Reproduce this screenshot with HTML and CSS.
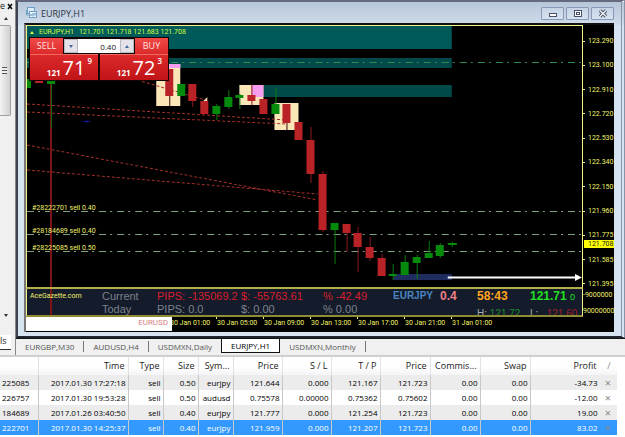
FILE: index.html
```
<!DOCTYPE html>
<html lang="en">
<head>
  <meta charset="UTF-8" />
  <meta name="viewport" content="width=device-width, initial-scale=1.0"/>
  <title>EURJPY,H1</title>
  <link rel="stylesheet" href="styles.css">
</head>
<body>

<div class="workspace">

  <!-- Docked panel, mostly off to the left -->
  <div class="dock">
    <div class="dock-head"><span>e</span><svg width="7" height="7" viewBox="0 0 7 7"><path d="M1 1l4 5M5 1L1 6" stroke="#111" stroke-width="1.6"/></svg></div>
    <div class="scroll">
      <i class="arrow up"></i>
      <div class="thumb"><i class="grip"></i></div>
      <i class="arrow down"></i>
    </div>
    <div class="dock-tab">ls</div>
  </div>

  <div class="main">
    <!-- Chart window -->
    <div class="window">
      <div class="titlebar">
        <svg class="app-icon" width="12" height="12" viewBox="0 0 12 12" fill="none" stroke="#6f9fc4">
          <rect x="1.5" y=".5" width="7" height="6" fill="#dcebf7"/>
          <rect x="3.5" y="4.5" width="7" height="6" fill="#eef6fc"/>
          <path d="M5 9V7M7 9.5V6M9 8.5V6" stroke="#4d86b4"/>
          <path d="M.5 3v5h2" />
        </svg>
        <span class="title">EURJPY,H1</span>
        <div class="controls">
          <button aria-label="Minimize"><svg width="10" height="9" viewBox="0 0 10 9"><rect x="1.5" y="4.5" width="7" height="3" fill="#fff" stroke="#46506a"/></svg></button>
          <button aria-label="Maximize"><svg width="10" height="9" viewBox="0 0 10 9"><rect x="1.5" y="1.5" width="7" height="6" fill="#fff" stroke="#46506a"/><rect x="3.5" y="3.5" width="3" height="2" fill="none" stroke="#46506a"/></svg></button>
          <button aria-label="Close"><svg width="10" height="9" viewBox="0 0 10 9"><path d="M2 1.5l6 6M8 1.5l-6 6" stroke="#46506a" stroke-width="3.2"/><path d="M2 1.5l6 6M8 1.5l-6 6" stroke="#fff" stroke-width="1.2"/></svg></button>
        </div>
      </div>

      <div class="chart">
        <div class="plot">
          <svg class="candles" viewBox="28 26 554 261" preserveAspectRatio="none">
            <!-- zones -->
            <path fill="#005a5a" d="M28 26H452V49H28z"/>
            <path fill="#004b49" d="M28 58H452V68H28zM264 85H452V97H264z"/>
            <path fill="#1e2d5e" d="M394 274H452V280H394z"/>
            <path fill="#fbe6b8" d="M157 64H181V106H157zM240 85H264V105H240zM275 103H299V130H275z"/>
            <path fill="#f79df0" d="M166 64H181V68H166zM252 85H264V97H252z"/>
            <!-- order lines -->
            <g fill="none" stroke-dasharray="7 4 2 5">
              <path stroke="#2f8a56" d="M28 62.5H582"/>
              <path stroke="#7fa37f" d="M28 211.5H582M28 234.5H582M28 251.5H582"/>
            </g>
            <path fill="none" stroke="#a03028" stroke-dasharray="3 2" d="M28 104L287 120M28 112L287 124M28 145L318 200M28 170L318 194M138 80L206 100"/>
            <path stroke="#7c1518" stroke-width="2" d="M52 83V287"/>
            <path stroke="#0a6a10" d="M52.5 83V128"/>
            <path stroke="#15158c" d="M84 121.5H91M87.5 120V123"/>
            <!-- wicks -->
            <path stroke="#8c1a1c" d="M193.5 84V107M252.5 85V105M311.5 127V183M323.5 171V232M347.5 224V252M358.5 227V272M370.5 237V261M382.5 254V276"/>
            <path stroke="#3a0c0c" d="M170.5 69V106M287.5 104V130"/>
            <path stroke="#0a7a10" d="M217.5 104V120M229.5 90V109M240.5 94V109M276.5 88V114M335.5 223V264M393.5 264V280M405.5 255V275M417.5 255V279M429.5 241V258M440.5 243V258M452.5 242V247"/>
            <!-- bodies -->
            <path fill="#b92226" d="M36 79h8v4h-8zM166 69h8v27h-8zM189 84h8v17h-8zM201 101h8v13h-8zM248 95h8v6h-8zM260 99h8v15h-8zM283 104h8v19h-8zM295 122h8v18h-8zM307 140h8v34h-8zM319 174h8v56h-8zM343 224h8v9h-8zM354 233h8v14h-8zM366 247h8v11h-8zM378 258h8v18h-8z"/>
            <path fill="#058a0b" d="M28 79h4v9h-4zM48 79h8v5h-8zM178 84h8v12h-8zM213 106h8v8h-8zM225 97h8v10h-8zM236 95h8v3h-8zM272 104h8v10h-8zM331 223h8v7h-8zM389 274h8v2h-8zM401 262h8v13h-8zM413 257h8v6h-8zM425 253h8v5h-8zM436 245h8v11h-8zM448 243h9v2h-9z"/>
            <path fill="#f6d9b0" d="M208 97v4h-4z"/>
            <path fill="#fff" d="M448 276.5H575V274L582 277.5L575 281V278.5H448z"/>
          </svg>
          <div class="quote"><i></i><span>EURJPY,H1</span><span>121.701 121.718 121.683 121.708</span></div>
          <span class="order o1">#28222701 sell 0.40</span>
          <span class="order o2">#28184689 sell 0.40</span>
          <span class="order o3">#28225085 sell 0.50</span>

          <!-- One click trading -->
          <div class="trade">
            <div class="trade-top">
              <button class="side">SELL</button>
              <div class="lot">
                <button aria-label="Less"><i class="arrow down"></i></button>
                <input type="text" value="0.40" aria-label="Volume">
                <button aria-label="More"><i class="arrow up"></i></button>
              </div>
              <button class="side">BUY</button>
            </div>
            <div class="trade-prices">
              <button class="price"><small>121</small><b>71</b><sup>9</sup></button>
              <button class="price"><small>121</small><b>72</b><sup>3</sup></button>
            </div>
          </div>
        </div>

        <div class="axis">
          <span>123.290</span><span>123.100</span><span>122.910</span><span>122.720</span><span>122.530</span><span>122.340</span><span>122.150</span><span>121.960</span><span>121.775</span><span>121.585</span><span>121.395</span>
          <span class="now">121.708</span>
        </div>

        <div class="info">
          <span class="site">AceGazette.com</span>
          <span class="g">Current</span><span class="r">PIPS: -135069.2</span><span class="r">$: -55763.61</span><span class="r">% -42.49</span>
          <b class="pair">EURJPY</b><b class="spread">0.4</b><b class="clock">58:43</b><b class="last">121.71 <small>0</small></b>
          <span></span>
          <span class="g">Today</span><span class="g">PIPS: 0.0</span><span class="g">$: 0.00</span><span class="g">% 0.00</span>
          <span></span><span></span>
          <span class="hl">H: <em class="hi">121.72</em></span><span class="hl">L: &nbsp; <em class="lo">121.60</em></span>
        </div>
        <div class="axis2"><span>-9000000</span><span>90000000</span></div>

        <div class="times">
          <div class="cover">EURUSD</div>
          <span>30 Jan 01:00</span><span>30 Jan 05:00</span><span>30 Jan 09:00</span><span>30 Jan 13:00</span><span>30 Jan 17:00</span><span>30 Jan 21:00</span><span>31 Jan 01:00</span>
        </div>
      </div>
    </div>

    <!-- Chart tabs -->
    <div class="tabs">
      <button>EURGBP,M30</button>
      <button>AUDUSD,H4</button>
      <button>USDMXN,Daily</button>
      <button class="active">EURJPY,H1</button>
      <button>USDMXN,Monthly</button>
    </div>
  </div>
</div>

<!-- Open orders -->
<table class="orders">
  <colgroup>
    <col class="c-id"><col class="c-time"><col class="c-s"><col class="c-s"><col class="c-s"><col class="c-m"><col class="c-m"><col class="c-m"><col class="c-l"><col class="c-l"><col class="c-l"><col><col class="c-x">
  </colgroup>
  <thead>
    <tr><th></th><th>Time</th><th>Type</th><th>Size</th><th>Sym...</th><th>Price</th><th>S / L</th><th>T / P</th><th>Price</th><th>Commis...</th><th>Swap</th><th>Profit</th><th class="sort">/</th></tr>
  </thead>
  <tbody>
    <tr><td>225085</td><td>2017.01.30 17:27:18</td><td>sell</td><td>0.50</td><td>eurjpy</td><td>121.644</td><td>0.000</td><td>121.167</td><td>121.723</td><td>0.00</td><td>0.00</td><td>-34.73</td><td><button aria-label="Close order">×</button></td></tr>
    <tr><td>226757</td><td>2017.01.30 19:53:28</td><td>sell</td><td>0.50</td><td>audusd</td><td>0.75578</td><td>0.00000</td><td>0.75362</td><td>0.75602</td><td>0.00</td><td>0.00</td><td>-12.00</td><td><button aria-label="Close order">×</button></td></tr>
    <tr><td>184689</td><td>2017.01.26 03:40:50</td><td>sell</td><td>0.40</td><td>eurjpy</td><td>121.777</td><td>0.000</td><td>121.254</td><td>121.723</td><td>0.00</td><td>0.00</td><td>19.00</td><td><button aria-label="Close order">×</button></td></tr>
    <tr class="selected"><td>222701</td><td>2017.01.30 14:25:37</td><td>sell</td><td>0.40</td><td>eurjpy</td><td>121.959</td><td>0.000</td><td>121.207</td><td>121.723</td><td>0.00</td><td>0.00</td><td>83.02</td><td><button aria-label="Close order">×</button></td></tr>
  </tbody>
</table>

</body>
</html>
```
FILE: styles.css
```
* {
  box-sizing: border-box;
}

body {
  margin: 0;
  background: #fff;
  font-family: "Open Sans", "Noto Sans", sans-serif;
  font-size: 8px;
  line-height: 12px;
  color: #222;
}

button {
  margin: 0;
  padding: 0;
  border: 0;
  background: none;
  font: inherit;
  color: inherit;
}

svg {
  display: block;
}

.workspace {
  display: flex;
  border-bottom: 2px solid #cfcfcf;
}

/* Left dock */
.dock {
  display: flex;
  flex-direction: column;
  width: 15px;
  background: #f0f0f0;
}

.dock-head {
  display: flex;
  align-items: center;
  gap: 2px;
  height: 12px;
  font-size: 9px;
}

.scroll {
  flex: 1;
  display: flex;
  flex-direction: column;
  align-items: center;
  width: 11px;
  padding: 5px 0 18px;
}

.arrow {
  display: block;
  width: 0;
  border: 2px solid transparent;
}

.arrow.up {
  border-bottom: 3px solid #333;
  border-top: 0;
}

.arrow.down {
  border-top: 3px solid #333;
  border-bottom: 0;
}

.thumb {
  display: flex;
  align-items: center;
  width: 11px;
  height: 91px;
  margin: 5px 0 auto;
  border: 1px solid #a0a0a0;
  border-left: 0;
  border-radius: 0 2px 2px 0;
  background: linear-gradient(90deg, #f4f4f4, #d0d0d4);
}

.grip {
  width: 5px;
  height: 7px;
  margin-left: 2px;
  background: repeating-linear-gradient(#555 0 1px, #eee 1px 3px);
}

.dock-tab {
  width: 11px;
  height: 15px;
  margin-bottom: 5px;
  border-bottom: 1px solid #333;
  background: #fff;
  font-size: 9px;
}

.main {
  flex: 1;
  min-width: 0;
  border-left: 1px solid #888;
}

/* Window */
.window {
  padding: 0 7px 4px 6px;
  border: 2px solid #3c4250;
  border-top-color: #666a80;
  border-right: 4px double #8793a8;
  border-bottom: 2px solid #20242c;
  background: linear-gradient(#b7c6d9, #cedbea 22px, #d6e3f1 24px);
}

.titlebar {
  display: flex;
  align-items: center;
  height: 21px;
}

.title {
  margin: 2px 0 0 3px;
  font-size: 9px;
  color: #2c3440;
}

.app-icon {
  margin-left: 2px;
}

.controls {
  display: flex;
  gap: 2px;
  margin-left: auto;
  padding-top: 2px;
}

.controls button {
  display: grid;
  place-items: center;
  width: 23px;
  height: 13px;
  border: 1px solid #8898b8;
  border-radius: 1px;
  background: linear-gradient(#c6d4e6, #d6e2f0);
}

/* Chart */
.chart {
  display: grid;
  grid-template-columns: 1fr 31px;
  background: #000;
  border-top: 2px solid #111;
  border-left: 2px solid #777;
  color: #f2f26c;
  font-family: Roboto, sans-serif;
  font-size: 7px;
}

.plot {
  position: relative;
  border: 1px solid #f4f48c;
  border-bottom: 2px solid #b5ad4c;
}

.candles {
  width: 100%;
  height: 261px;
}

.quote {
  position: absolute;
  top: 0;
  left: 3px;
  display: flex;
  align-items: center;
  gap: 5px;
  color: #d6ff3c;
}

.quote i {
  border: 2px solid transparent;
  border-top: 0;
  border-bottom: 3px solid #d6ff3c;
}

.order {
  position: absolute;
  left: 5px;
}

.o1 { top: 176px; }
.o2 { top: 199px; }
.o3 { top: 216px; }

.axis {
  position: relative;
  display: flex;
  flex-direction: column;
  justify-content: space-between;
  padding-top: 11px;
}

.axis span {
  display: flex;
  align-items: center;
  gap: 3px;
  height: 10px;
}

.axis span::before {
  content: "";
  width: 2px;
  height: 1px;
  background: #f2f26c;
}

.axis .now {
  position: absolute;
  top: 215px;
  left: 1px;
  right: 0;
  height: 8px;
  background: #ff0;
  color: #222;
}

.axis .now::before {
  width: 1px;
  background: none;
}

/* One click trading panel */
.trade {
  position: absolute;
  top: 11px;
  left: 2px;
  width: 140px;
  padding: 1px;
  background: #140404;
  color: #fff;
}

.trade-top,
.trade-prices {
  display: flex;
  justify-content: space-between;
}

.side {
  width: 33px;
  height: 16px;
  background: linear-gradient(#f04a48, #dc2a2a);
  color: #ffe2e0;
  font-family: "Open Sans", sans-serif;
  font-size: 9px;
}

.lot {
  display: flex;
  width: 70px;
  height: 14px;
  margin-top: 1px;
  background: #fff;
}

.lot button {
  display: grid;
  place-items: center;
  width: 14px;
  border: 1px solid #b8b8c0;
  background: #e2e2e8;
}

.lot .arrow.up {
  border-bottom-color: #4466a0;
}

.lot .arrow.down {
  border-top-color: #4466a0;
}

.lot input {
  flex: 1;
  min-width: 0;
  padding: 0 4px;
  border: 0;
  font-family: "Open Sans", sans-serif;
  font-size: 8px;
  text-align: right;
  color: #111;
}

.price {
  display: flex;
  justify-content: flex-end;
  align-items: flex-end;
  gap: 2px;
  width: 68px;
  height: 26px;
  padding-right: 6px;
  border-top: 1px solid #f06a60;
  background: linear-gradient(#dd2a2a, #c01418);
  font-family: "Open Sans", sans-serif;
}

.price small {
  font-size: 8px;
  font-weight: 700;
  line-height: 14px;
}

.price b {
  font-size: 20px;
  font-weight: 400;
  line-height: 24px;
}

.price sup {
  align-self: flex-start;
  font-size: 8px;
  font-weight: 600;
  line-height: 12px;
}

/* Account info strip */
.info {
  display: grid;
  grid-template-columns: 72px 55px 84px 82px 70px 47px 37px 53px 1fr;
  grid-template-rows: 14px 12px;
  align-items: center;
  height: 28px;
  padding-left: 3px;
  overflow: hidden;
  border: 1px solid #f4f48c;
  border-top: 0;
  border-bottom: 2px solid #8e8c34;
  background: linear-gradient(90deg, transparent 23px, #7c1518 23px 25px, transparent 25px), #141b2a;
  font-family: "Liberation Sans", sans-serif;
  font-size: 11px;
  white-space: nowrap;
}

.site {
  font-family: Roboto, sans-serif;
  font-size: 7px;
}

.g { color: #7d828c; }
.r { color: #d81f2e; }
.pair { color: #4a86c0; font-size: 10px; }
.spread { color: #f08088; font-size: 12px; }
.clock { color: #ffa520; font-size: 12px; }
.last { color: #22e022; font-size: 12px; }

.last small {
  font-size: 9px;
  font-weight: 400;
}

.hl {
  padding-top: 10px;
  color: #aaa;
  font-size: 10px;
}

.hl em {
  font-style: normal;
}

.hi { color: #1c8a2c; }
.lo { color: #a01e28; }

.axis2 {
  display: flex;
  flex-direction: column;
  justify-content: space-between;
}

.times {
  position: relative;
  grid-column: 1 / 3;
  display: flex;
  height: 15px;
  padding-left: 143px;
  white-space: nowrap;
}

.times span {
  width: 47px;
  border-left: 1px solid transparent;
  border-image: linear-gradient(#f2f26c 0 3px, transparent 3px) 1;
}

.cover {
  position: absolute;
  top: 0;
  left: 0;
  width: 146px;
  height: 14px;
  padding-right: 4px;
  background: #fff;
  color: #d88080;
  font-size: 8px;
  text-align: right;
}

/* Tabs */
.tabs {
  display: flex;
  height: 17px;
  border-top: 1px solid #111;
  background: #f0f0f0;
  color: #555;
}

.tabs button {
  height: 11px;
  margin-top: 2px;
  padding: 0 9px;
  border-right: 1px solid #777;
  line-height: 11px;
  white-space: nowrap;
}

.tabs button:nth-child(3) {
  border-right: 0;
}

.tabs .active {
  height: 14px;
  margin-top: 0;
  border: 1px solid #111;
  border-top: 0;
  background: #fff;
  color: #000;
}

/* Orders table */
.orders {
  width: calc(100% - 8px);
  table-layout: fixed;
  border-collapse: collapse;
}

.c-id { width: 38px; }
.c-time { width: 90px; }
.c-s { width: 35px; }
.c-m { width: 49px; }
.c-l { width: 50px; }
.c-x { width: 17px; }

.orders th,
.orders td {
  height: 15px;
  padding: 0 2px;
  border-right: 1px solid #c8c8c8;
  font-weight: 400;
  text-align: right;
  white-space: nowrap;
}

.orders td {
  color: #000;
}

.orders th {
  height: 18px;
  padding-right: 3px;
  border-color: #e2e2e6;
  background: linear-gradient(#fff 50%, #f4f4f6);
  font-size: 9px;
}

.orders tr > :first-child {
  padding-right: 14px;
}

.orders tr > :nth-child(12),
.orders tr > :nth-child(13) {
  border-right: 0;
}

.orders .sort {
  padding-right: 6px;
  color: #888;
}

.orders tbody tr:nth-child(odd) {
  background: #ececec;
}

.orders .selected,
.orders .selected td {
  background: #3399ff;
  color: #fff;
}

.orders td button {
  display: block;
  margin: 0 auto;
  color: #888;
  font-size: 11px;
  line-height: 12px;
}
```
